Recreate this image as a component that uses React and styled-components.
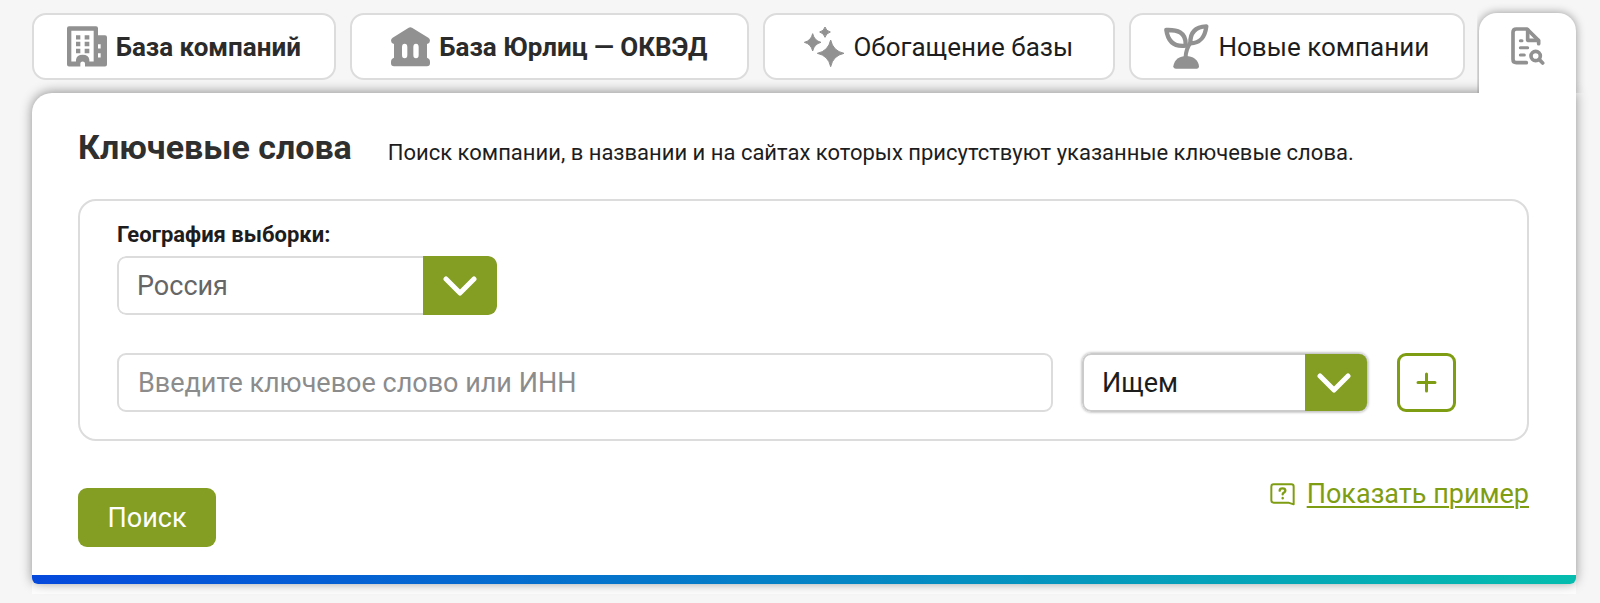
import React, { useState } from "react";
import styled, { createGlobalStyle } from "styled-components";

const GlobalStyle = createGlobalStyle`
    * {
        box-sizing: border-box;
    }
    body {
        margin: 0;
        background-color: #f6f6f6;
        color: #1d1d1d;
        font-family: Roboto, "Noto Sans", sans-serif;
    }
    button, input, select {
        margin: 0;
        font-family: inherit;
    }
`;

const Page = styled.div`
    padding: 13px 24px 8px 32px;
`;

const Tabs = styled.nav`
    display: grid;
    grid-template-columns: 304fr 400fr 352fr 337fr 97fr;
    column-gap: 14px;
`;

const Tab = styled.button`
    display: flex;
    align-items: center;
    justify-content: center;
    gap: 9px;
    height: 67px;
    margin-bottom: 13px;
    padding: 0;
    border: 2px solid #dcdcdc;
    border-radius: 14px;
    background-color: white;
    color: ${(props) => (props.$bold ? "#2b2b2b" : "#1d1d1d")};
    font-size: 26px;
    line-height: 32px;
    font-weight: ${(props) => (props.$bold ? 700 : 400)};
    white-space: nowrap;
    cursor: pointer;
`;

/* stands above the panel and hides its shadow */
const ActiveTab = styled.button`
    position: relative;
    z-index: 1;
    height: 80px;
    padding: 0 0 12px;
    border: none;
    border-radius: 18px 18px 0 0;
    background-color: white;
    box-shadow: 0 0 10px rgba(0, 0, 0, 0.4);
    clip-path: inset(-12px -12px 0 -2px);
    cursor: pointer;
`;

const Sheet = styled.div`
    padding-bottom: 10px;
    border-radius: 20px 0 0 0;
    background-color: #fdfdfd;
`;

const Panel = styled.main`
    overflow: hidden;
    border-radius: 20px 0 6px 6px;
    background-color: white;
    box-shadow: 0 -1px 12px rgba(0, 0, 0, 0.42);
`;

const GradientLine = styled.div`
    height: 9px;
    background: linear-gradient(90deg, #0549dc, #05bcae);
`;

const Content = styled.div`
    padding: 30px 47px 28px 46px;
`;

const Heading = styled.header`
    display: flex;
    align-items: flex-end;
    gap: 36px;
    margin-bottom: 28px;
`;

const Title = styled.h1`
    margin: 0;
    color: #2f2f2f;
    font-size: 34px;
    line-height: 48px;
    white-space: nowrap;
`;

const Description = styled.p`
    margin: 0;
    font-size: 22px;
    line-height: 36px;
`;

const Filters = styled.section`
    padding: 18px 71px 27px 37px;
    border: 2px solid #dcdcdc;
    border-radius: 18px;
`;

const Label = styled.label`
    display: block;
    margin-bottom: 5px;
    font-size: 22px;
    line-height: 32px;
    font-weight: 700;
`;

const SelectBox = styled.div`
    display: grid;
    grid-template-columns: 1fr ${(props) => props.$arrow}px;
    width: ${(props) => props.$width}px;
    height: 59px;
    flex-shrink: 0;
    overflow: hidden;
    border-radius: 9px;
    box-shadow: ${(props) => (props.$raised ? "0 0 3px rgba(0, 0, 0, 0.4)" : "none")};
`;

const Select = styled.select`
    grid-area: 1 / 1 / 2 / 3;
    padding: 0 18px;
    border: 2px solid ${(props) => (props.$raised ? "#cbcbcb" : "#dcdcdc")};
    border-radius: 9px;
    background-color: white;
    color: ${(props) => (props.$raised ? "#1d1d1d" : "#666666")};
    font-size: 27px;
    appearance: none;
`;

const Arrow = styled.span`
    grid-area: 1 / 2 / 2 / 3;
    display: flex;
    align-items: center;
    justify-content: center;
    margin: ${(props) => (props.$raised ? "1px 1px 1px 0" : "0")};
    padding-right: ${(props) => (props.$raised ? 5 : 0)}px;
    border-radius: 0 8px 8px 0;
    background-color: #839e22;
    pointer-events: none;
`;

const KeywordRow = styled.div`
    display: flex;
    align-items: center;
    gap: 29px;
    margin-top: 38px;
`;

const KeywordInput = styled.input`
    flex: 1;
    min-width: 0;
    height: 59px;
    padding: 0 19px;
    border: 2px solid #dcdcdc;
    border-radius: 9px;
    background-color: white;
    color: #1d1d1d;
    font-size: 27px;

    &::placeholder {
        color: #8c8c8c;
        opacity: 1;
    }
`;

const AddButton = styled.button`
    display: flex;
    align-items: center;
    justify-content: center;
    width: 59px;
    height: 59px;
    flex-shrink: 0;
    padding: 0;
    border: 3px solid #7f9d12;
    border-radius: 9px;
    background-color: white;
    cursor: pointer;
`;

const Footer = styled.footer`
    display: flex;
    align-items: flex-end;
    justify-content: space-between;
    height: 106px;
`;

const SearchButton = styled.button`
    width: 138px;
    height: 59px;
    padding: 0;
    border: none;
    border-radius: 9px;
    background-color: #839e22;
    color: white;
    font-size: 27px;
    cursor: pointer;
`;

const ExampleLink = styled.a`
    display: flex;
    align-items: center;
    align-self: flex-start;
    gap: 12px;
    margin-top: 34px;
    color: #7f9d12;
    font-size: 27px;
    line-height: 38px;
    text-decoration: none;

    span {
        text-decoration: underline;
        text-decoration-thickness: 2px;
        text-underline-offset: 3px;
    }
`;

const GREY = "#919191";

const BuildingIcon = () => (
    <svg width="40" height="41" viewBox="0 0 120 122" fill={GREY} aria-hidden="true">
        <path
            fillRule="evenodd"
            d="M6 0H87Q93 0 93 6V27H114Q120 27 120 33V115Q120 121 114 121H54V112Q54 106 47 106Q40 106 40 112V121H6Q0 121 0 115V6Q0 0 6 0ZM13 14V106H27V101Q29 86 47 86Q65 86 67 101V106H80V14ZM93 54V67H101V54ZM93 81V94H101V81Z"
        />
        <path d="M27 27h13v13H27zM53 27h14v13H53zM27 47h13v13H27zM53 47h14v13H53zM27 68h13v13H27zM53 68h14v13H53z" />
    </svg>
);

const BankIcon = () => (
    <svg width="39" height="40" viewBox="0 0 117 120" fill={GREY} aria-hidden="true">
        <path
            fillRule="evenodd"
            d="M53 2Q58 -1 63 2L112 32Q117 35 117 41Q117 48 108 51V92Q117 95 117 105V109Q117 118 108 118H9Q0 118 0 109V105Q0 95 9 92V51Q0 48 0 41Q0 35 5 32ZM41 50Q33 50 33 60V84Q33 94 41 94Q49 94 49 84V60Q49 50 41 50ZM75 50Q67 50 67 60V84Q67 94 75 94Q83 94 83 84V60Q83 50 75 50Z"
        />
    </svg>
);

const SparklesIcon = () => (
    <svg width="40" height="40" viewBox="0 0 120 120" fill={GREY} aria-hidden="true">
        <path d="M80 39Q87 72 120 79Q87 86 80 119Q73 86 40 79Q73 72 80 39Z" stroke={GREY} strokeWidth="3" strokeLinejoin="round" />
        <path d="M26 20Q31 41 51 46Q31 51 26 72Q21 51 1 46Q21 41 26 20Z" stroke={GREY} strokeWidth="3" strokeLinejoin="round" />
        <path d="M63 0Q66 12 79 15Q66 19 63 31Q60 19 47 15Q60 12 63 0Z" stroke={GREY} strokeWidth="3" strokeLinejoin="round" />
    </svg>
);

const SproutIcon = () => (
    <svg width="45" height="45" viewBox="0 0 135 135" fill="none" stroke={GREY} strokeLinejoin="round" strokeLinecap="round" aria-hidden="true">
        <path strokeWidth="13" d="M7 18C38 17 67 22 65 65C32 69 12 54 7 18Z" />
        <path strokeWidth="13" d="M127 7C98 8 78 22 79 58C110 57 123 40 127 7Z" />
        <path strokeWidth="12" d="M78 58Q66 76 65 98" />
        <path fill={GREY} stroke="none" d="M36 134Q28 134 28 127C31 106 47 96 66 96C87 96 103 107 105 127Q105 134 99 134Z" />
    </svg>
);

const DocumentSearchIcon = () => (
    <svg width="34" height="38" viewBox="0 0 102 114" fill="none" stroke={GREY} strokeWidth="11" strokeLinejoin="round" strokeLinecap="round" aria-hidden="true">
        <path d="M46 107H16Q6 107 6 97V16Q6 6 16 6H48L83 41V50" />
        <path d="M50 8V40H82" />
        <path d="M28 41H33M28 62H50M28 84H40" strokeWidth="9" />
        <circle cx="74" cy="87" r="14" />
        <path d="M85 98L95 108" />
    </svg>
);

const ChevronIcon = () => (
    <svg width="34" height="20" viewBox="0 0 34 20" fill="none" stroke="white" strokeWidth="5" strokeLinecap="round" strokeLinejoin="round" aria-hidden="true">
        <path d="M3 3L17 17L31 3" />
    </svg>
);

const PlusIcon = () => (
    <svg width="21" height="21" viewBox="0 0 21 21" stroke="#7f9d12" strokeWidth="3" strokeLinecap="round" aria-hidden="true">
        <path d="M10.5 2V19M2 10.5H19" />
    </svg>
);

const QuestionIcon = () => (
    <svg width="25" height="23" viewBox="0 0 75 69" fill="none" stroke="#7f9d12" strokeWidth="6" strokeLinecap="round" strokeLinejoin="round" aria-hidden="true">
        <path d="M11 4H64Q71 4 71 11V64L55 59H11Q4 59 4 52V11Q4 4 11 4Z" />
        <path d="M29 23C29 14 46 14 46 23C46 29 38 28 38 34" strokeWidth="7" />
        <path d="M38 45V46" strokeWidth="7" />
    </svg>
);

const tabs = [
    { title: "База компаний", icon: <BuildingIcon />, bold: true },
    { title: "База Юрлиц — ОКВЭД", icon: <BankIcon />, bold: true },
    { title: "Обогащение базы", icon: <SparklesIcon /> },
    { title: "Новые компании", icon: <SproutIcon /> },
];

function App() {
    const [form, setForm] = useState({
        region: "Россия",
        keyword: "",
        mode: "Ищем",
    });
    const { region, keyword, mode } = form;

    const putFormValue = (e) => {
        const { name, value } = e.target;
        setForm({ ...form, [name]: value });
    };

    return (
        <>
            <GlobalStyle />
            <Page>
                <Tabs>
                    {tabs.map((tab) => (
                        <Tab key={tab.title} type="button" $bold={tab.bold}>
                            {tab.icon}
                            {tab.title}
                        </Tab>
                    ))}
                    <ActiveTab type="button" aria-label="Ключевые слова">
                        <DocumentSearchIcon />
                    </ActiveTab>
                </Tabs>
                <Sheet>
                    <Panel>
                        <Content>
                            <Heading>
                                <Title>Ключевые слова</Title>
                                <Description>
                                    Поиск компании, в названии и на сайтах которых присутствуют указанные ключевые слова.
                                </Description>
                            </Heading>
                            <Filters>
                                <Label htmlFor="region">География выборки:</Label>
                                <SelectBox $width={380} $arrow={74}>
                                    <Select id="region" name="region" value={region} onChange={putFormValue}>
                                        <option>Россия</option>
                                    </Select>
                                    <Arrow>
                                        <ChevronIcon />
                                    </Arrow>
                                </SelectBox>
                                <KeywordRow>
                                    <KeywordInput
                                        type="text"
                                        name="keyword"
                                        value={keyword}
                                        onChange={putFormValue}
                                        placeholder="Введите ключевое слово или ИНН"
                                        aria-label="Ключевое слово или ИНН"
                                    />
                                    <SelectBox $width={286} $arrow={63} $raised>
                                        <Select name="mode" value={mode} onChange={putFormValue} aria-label="Режим" $raised>
                                            <option>Ищем</option>
                                        </Select>
                                        <Arrow $raised>
                                            <ChevronIcon />
                                        </Arrow>
                                    </SelectBox>
                                    <AddButton type="button" aria-label="Добавить">
                                        <PlusIcon />
                                    </AddButton>
                                </KeywordRow>
                            </Filters>
                            <Footer>
                                <SearchButton type="button">Поиск</SearchButton>
                                <ExampleLink href="#example">
                                    <QuestionIcon />
                                    <span>Показать пример</span>
                                </ExampleLink>
                            </Footer>
                        </Content>
                        <GradientLine />
                    </Panel>
                </Sheet>
            </Page>
        </>
    );
}

export default App;
